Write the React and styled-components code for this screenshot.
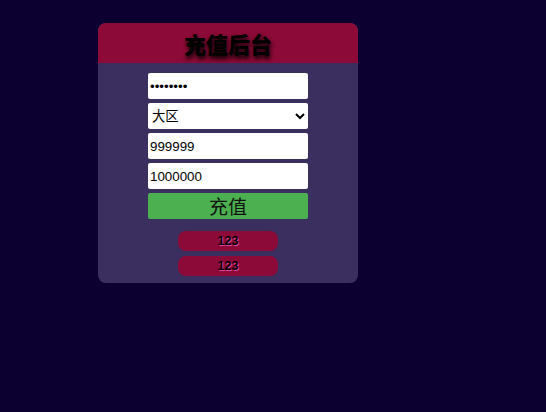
import React from 'react';
import styled, { createGlobalStyle } from 'styled-components';

const GlobalStyle = createGlobalStyle`
  html, body {
    margin: 0;
    padding: 0;
    background: #0b0030;
    font-family: "Liberation Sans", "Noto Sans CJK SC", sans-serif;
  }
`;

const Page = styled.div`
  padding: 23px 0 0 98px;
  min-height: 412px;
  box-sizing: border-box;
`;

const Card = styled.div`
  width: 260px;
  background: #3a2f5f;
  border-radius: 8px;
  overflow: hidden;
  padding-bottom: 7px;
`;

const Header = styled.h1`
  margin: 0;
  height: 40px;
  background: #8b0a37;
  color: #000;
  font-family: "Noto Sans CJK SC", sans-serif;
  font-size: 22px;
  font-weight: 900;
  line-height: 40px;
  text-align: center;
  text-shadow: 1px 3px 4px #000;
`;

const Form = styled.form`
  display: flex;
  flex-direction: column;
  align-items: center;
  gap: 4px;
  padding-top: 10px;
`;

const Field = styled.input`
  box-sizing: border-box;
  width: 160px;
  height: 26px;
  border: none;
  border-radius: 2px;
  padding: 0 2px;
  background: #fff;
  color: #000;
  font-family: "Liberation Sans", "Noto Sans CJK SC", sans-serif;
  font-size: 13.33px;
  outline: none;
`;

const Select = styled.select`
  box-sizing: border-box;
  width: 160px;
  height: 26px;
  border: none;
  border-radius: 2px;
  background: #fff;
  color: #000;
  font-family: "Liberation Sans", "Noto Sans CJK SC", sans-serif;
  font-size: 13.33px;
  outline: none;
`;

const Submit = styled.button`
  box-sizing: border-box;
  width: 160px;
  height: 26px;
  border: none;
  border-radius: 2px;
  background: #4caf50;
  color: #111;
  font-family: "Noto Sans CJK SC", sans-serif;
  font-size: 19px;
  line-height: 26px;
  padding: 0;
  cursor: pointer;
`;

const Links = styled.div`
  display: flex;
  flex-direction: column;
  align-items: center;
  gap: 5px;
  margin-top: 12px;
`;

const Pill = styled.button`
  width: 100px;
  height: 20px;
  border: none;
  border-radius: 8px;
  background: #8b0a37;
  color: #000;
  font-family: "Liberation Sans", sans-serif;
  font-size: 12.5px;
  font-weight: 700;
  padding: 0;
  text-shadow: 1px 1px 0 #e0409f;
  cursor: pointer;
`;

export default function App() {
  return (
    <>
      <GlobalStyle />
      <Page>
        <Card>
          <Header>充值后台</Header>
          <Form onSubmit={e => e.preventDefault()}>
            <Field type="password" defaultValue="12345678" />
            <Select defaultValue="1">
              <option value="1">大区</option>
            </Select>
            <Field type="text" defaultValue="999999" />
            <Field type="text" defaultValue="1000000" />
            <Submit type="submit">充值</Submit>
          </Form>
          <Links>
            <Pill>123</Pill>
            <Pill>123</Pill>
          </Links>
        </Card>
      </Page>
    </>
  );
}
